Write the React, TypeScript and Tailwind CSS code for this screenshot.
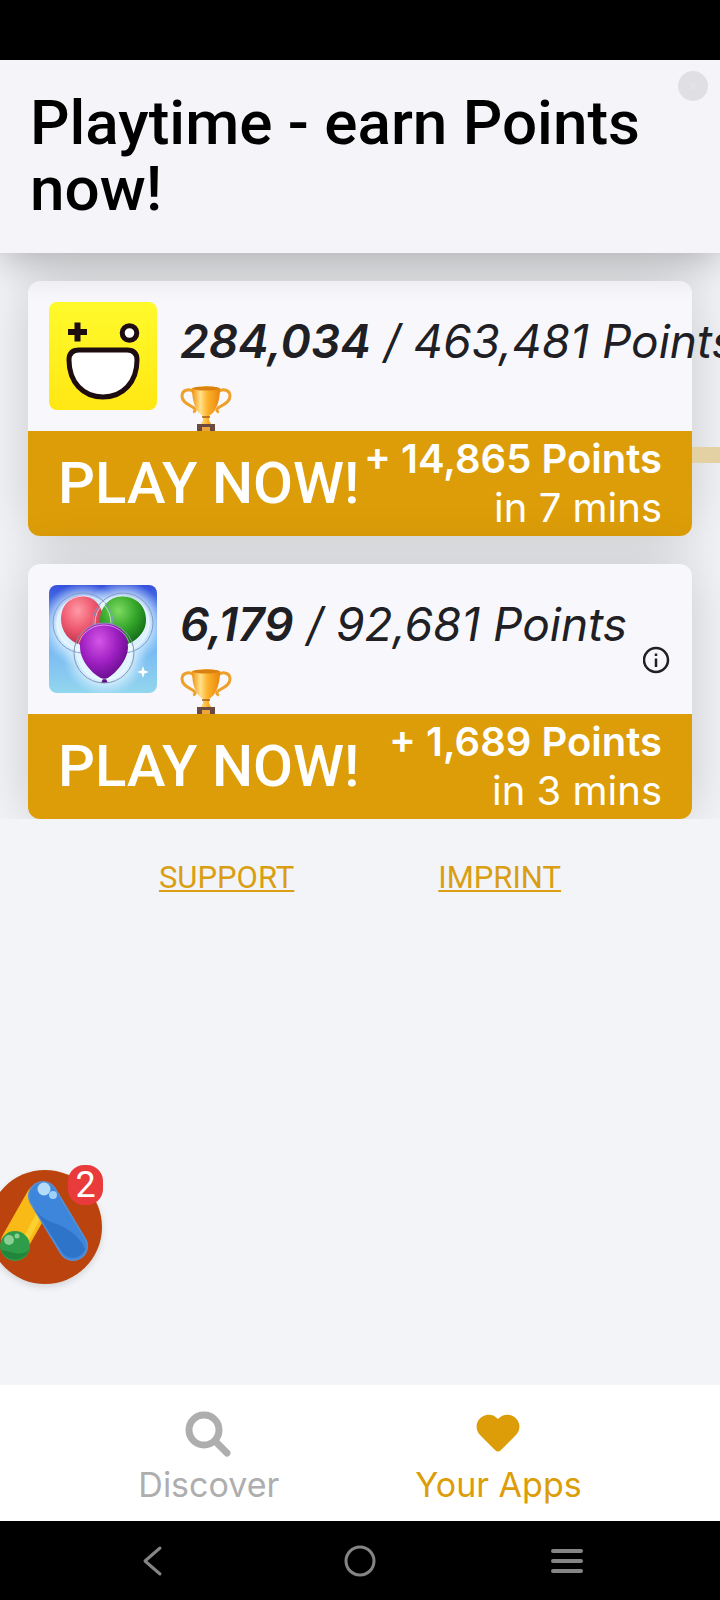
import type { ReactNode } from 'react';

type Offer = {
  id: number;
  icon: ReactNode;
  earned: string;
  total: string;
  reward: string;
  time: string;
  info: boolean;
};

const SmileIcon = () => (
  <svg viewBox="0 0 108 108" className="w-full h-full" aria-hidden="true">
    <defs>
      <linearGradient id="smileBg" x1="0" y1="0" x2="0" y2="1">
        <stop offset="0" stopColor="#fffa2c" />
        <stop offset="1" stopColor="#ffe713" />
      </linearGradient>
    </defs>
    <rect width="108" height="108" fill="url(#smileBg)" />
    <path d="M19 30h19M28.500 20.500v19" stroke="#1d0d10" strokeWidth="6" />
    <circle cx="80.500" cy="31" r="7.300" fill="#fff" stroke="#1d0d10" strokeWidth="5" />
    <path
      d="M30 48H78Q88 48 88 58C88 80 74 95 54 95S20 80 20 58Q20 48 30 48Z"
      fill="#fff"
      stroke="#1d0d10"
      strokeWidth="5"
    />
  </svg>
);

const BalloonIcon = () => (
  <svg viewBox="0 0 108 108" className="w-full h-full" aria-hidden="true">
    <defs>
      <linearGradient id="sky" x1="0" y1="0" x2="0" y2="1">
        <stop offset="0" stopColor="#3650dc" />
        <stop offset=".45" stopColor="#6fb0f4" />
        <stop offset="1" stopColor="#93d6ee" />
      </linearGradient>
      <radialGradient id="glow">
        <stop offset=".6" stopColor="#e6f6ff" stopOpacity=".95" />
        <stop offset="1" stopColor="#bfe4ff" stopOpacity="0" />
      </radialGradient>
      <radialGradient id="pink" cx=".4" cy=".3" r=".75">
        <stop offset="0" stopColor="#ff9aa5" />
        <stop offset=".5" stopColor="#ef5a70" />
        <stop offset="1" stopColor="#b82c48" />
      </radialGradient>
      <radialGradient id="green" cx=".4" cy=".3" r=".75">
        <stop offset="0" stopColor="#7fdb62" />
        <stop offset=".5" stopColor="#36a82c" />
        <stop offset="1" stopColor="#0f6614" />
      </radialGradient>
      <radialGradient id="purple" cx=".4" cy=".3" r=".75">
        <stop offset="0" stopColor="#d455e6" />
        <stop offset=".5" stopColor="#9d1fc0" />
        <stop offset="1" stopColor="#55087c" />
      </radialGradient>
    </defs>
    <rect width="108" height="108" fill="url(#sky)" />
    <circle cx="34" cy="40" r="42" fill="url(#glow)" />
    <circle cx="74" cy="38" r="42" fill="url(#glow)" />
    <circle cx="56" cy="70" r="42" fill="url(#glow)" />
    <path d="M32 11C45 11 54 21 54 34S40 57 32 60C20 57 12 46 12 34S20 11 32 11Z" fill="url(#pink)" />
    <path d="M74 11C88 11 97 22 97 35S86 57 76 60C62 57 51 47 51 35S60 11 74 11Z" fill="url(#green)" />
    <circle cx="34" cy="38" r="30" fill="none" stroke="#7f9cc8" />
    <circle cx="35" cy="38" r="27" fill="none" stroke="#fff" strokeOpacity=".6" />
    <circle cx="74" cy="38" r="30" fill="none" stroke="#7f9cc8" />
    <circle cx="73" cy="38" r="27" fill="none" stroke="#fff" strokeOpacity=".6" />
    <path d="M55 38C70 38 79 48 79 62S65 90 57 94L59 98H52L54 94C44 90 31 76 31 62S41 38 55 38Z" fill="url(#purple)" />
    <circle cx="55" cy="68" r="30" fill="none" stroke="#8794b8" />
    <circle cx="55" cy="67" r="27" fill="none" stroke="#fff" strokeOpacity=".5" />
    <path d="M94 81l1.500 4.500L100 87l-4.500 1.500L94 93l-1.500-4.500L88 87l4.500-1.500Z" fill="#fff" />
  </svg>
);

const Trophy = () => (
  <svg viewBox="0 0 52 52" className="w-[52px] h-[52px]" role="img" aria-label="Trophy">
    <defs>
      <linearGradient id="cup" x1="0" x2="1">
        <stop offset="0" stopColor="#f0920f" />
        <stop offset=".3" stopColor="#ffe08a" />
        <stop offset=".55" stopColor="#fdb32b" />
        <stop offset="1" stopColor="#e8860c" />
      </linearGradient>
    </defs>
    <path
      d="M14 7C9 3 2 5 2 11C2 17 8 19 14 23Q17 26 13 27M38 7C43 3 50 5 50 11C50 17 44 19 38 23Q35 26 39 27"
      fill="none"
      stroke="#eda02a"
      strokeWidth="3"
    />
    <path d="M12 3Q26 -1 40 3C40 17 36 27 29 31V35Q30 38 33 41H19Q22 38 23 35V31C16 27 12 17 12 3Z" fill="url(#cup)" />
    <ellipse cx="26" cy="3.500" rx="13" ry="2" fill="#d98212" />
    <path d="M22 32H30" stroke="#a85e10" strokeWidth="1.500" />
    <path d="M17 39H35V52H17Z" fill="#6b4a42" />
    <path d="M22 42H30V49H22Z" fill="#eca53b" />
  </svg>
);

const AdsBubble = () => (
  <svg viewBox="0 0 116 116" className="w-full h-full drop-shadow-md" aria-hidden="true">
    <circle cx="58" cy="58" r="57" fill="#bb430d" />
    <path d="M28 73L53 29" stroke="#f9b916" strokeWidth="28" strokeLinecap="round" />
    <path d="M32 83L53 44" stroke="#fbd02f" strokeWidth="6" />
    <path d="M56 27L86 77" stroke="#5a8fd0" strokeWidth="30" strokeLinecap="round" />
    <path d="M56 27L86 77" stroke="#3d86dc" strokeWidth="27" strokeLinecap="round" />
    <path d="M46 38Q54 50 67 54Q90 62 98 80A13 13 0 0 1 75 83Z" fill="#2e74c9" />
    <circle cx="28" cy="77" r="15" fill="#2f9c49" />
    <path d="M14 81A15 15 0 0 0 42 81Q36 86 28 84T14 81Z" fill="#21863b" />
    <circle cx="22" cy="71" r="5" fill="#8bcf93" />
    <circle cx="30" cy="67" r="2.500" fill="#8bcf93" />
    <circle cx="57" cy="20" r="6.500" fill="#b4dcf9" />
    <circle cx="66" cy="26" r="4" fill="#a0d0f8" />
  </svg>
);

const offers: Offer[] = [
  {
    id: 1,
    icon: <SmileIcon />,
    earned: '284,034',
    total: '463,481 Points',
    reward: '+ 14,865 Points',
    time: 'in 7 mins',
    info: false,
  },
  {
    id: 2,
    icon: <BalloonIcon />,
    earned: '6,179',
    total: '92,681 Points',
    reward: '+ 1,689 Points',
    time: 'in 3 mins',
    info: true,
  },
];

const OfferCard = ({ offer }: { offer: Offer }) => (
  <article className="relative rounded-xl bg-[#f8f8fc] shadow-[0_0_56px_rgba(0,0,0,0.18)]">
    {/* Progress track of the neighbouring slide */}
    {!offer.info && <div className="absolute left-full top-[166px] w-10 h-4 bg-[#e3d1a3]"></div>}

    <div className="flex h-[150px] px-[21px] pt-[21px]">
      <div className="w-[108px] h-[108px] shrink-0 rounded-lg overflow-hidden">{offer.icon}</div>
      <div className="ml-[23px] pt-[7px] flex-1 min-w-0 whitespace-nowrap font-['Inter',sans-serif] text-[46px] leading-[64px] italic font-normal text-[#202024]">
        <p>
          <strong className="font-semibold">{offer.earned}</strong> / {offer.total}
        </p>
        <div className="pt-3">
          <Trophy />
        </div>
      </div>
      {offer.info && (
        <button type="button" aria-label="Offer details" className="shrink-0 self-start mt-[61px] w-7 h-7">
          <svg viewBox="0 0 28 28" fill="none" stroke="#202024" strokeWidth="2.500">
            <circle cx="13" cy="14" r="12" />
            <path d="M13 12.500V21M13 7.500V10" />
          </svg>
        </button>
      )}
    </div>

    <button
      type="button"
      className="relative flex w-full h-[105px] items-center justify-between rounded-b-xl bg-[#dc9d08] px-[30px] pb-[2px] text-white whitespace-nowrap"
    >
      <span className="text-[58px] leading-[64px] font-medium">PLAY NOW!</span>
      <span className="flex flex-col text-right font-['Inter',sans-serif] text-[40px] leading-[49px]">
        <span className="font-semibold">{offer.reward}</span>
        <span>{offer.time}</span>
      </span>
    </button>
  </article>
);

const App = () => {
  return (
    <div className="min-h-screen flex flex-col overflow-hidden bg-[#f3f4f7] font-['Roboto',sans-serif]">
      <div className="h-[60px] bg-black"></div>

      <header className="relative z-10 bg-[#f4f4f9] px-[30px] pt-[30px] pb-[31px] shadow-[0_4px_40px_rgba(0,0,0,0.32)]">
        <h1 className="text-[62px] leading-[66px] font-medium text-black">Playtime - earn Points now!</h1>
        <button
          type="button"
          aria-label="Close"
          className="absolute right-3 top-[11px] w-[30px] h-[30px] rounded-full bg-[#dfdfe4] flex items-center justify-center"
        >
          <svg viewBox="0 0 10 10" className="w-2 h-2" stroke="#e5e5e9" strokeWidth="2">
            <path d="M1 1l8 8M9 1l-8 8" />
          </svg>
        </button>
      </header>

      <main className="relative flex-1">
        <section className="flex flex-col gap-7 overflow-hidden px-7 pt-7">
          {offers.map((offer) => (
            <OfferCard key={offer.id} offer={offer} />
          ))}
        </section>

        <div className="flex justify-center gap-36 pt-[41px] text-[31px] leading-[36px] text-[#d99e14]">
          <a href="#support" className="underline decoration-2 underline-offset-2">SUPPORT</a>
          <a href="#imprint" className="underline decoration-2 underline-offset-2">IMPRINT</a>
        </div>

        {/* Floating bubble */}
        <button type="button" aria-label="Ads, 2 notifications" className="absolute -left-[13px] bottom-[100px] w-[116px] h-[116px]">
          <AdsBubble />
          <span className="absolute right-0 -top-1 w-[35px] h-10 rounded-2xl bg-[#e93b3b] text-white text-[36px] leading-[40px]">
            2
          </span>
        </button>
      </main>

      <nav className="flex justify-center gap-[136px] bg-white pt-6 pb-[14px] font-['Inter',sans-serif] text-[34px] leading-[44px]">
        <a href="#discover" className="flex flex-col items-center text-[#aeaeae]">
          <svg viewBox="0 0 48 48" className="w-12 h-12 mb-1.5" fill="none" stroke="currentColor">
            <circle cx="19" cy="21" r="15" strokeWidth="7" />
            <path d="M31 33L42 44" strokeWidth="7" strokeLinecap="round" />
          </svg>
          Discover
        </a>
        <a href="#apps" className="flex flex-col items-center text-[#dc9d08]">
          <svg viewBox="0 0 48 48" className="w-12 h-12 mb-1.5" fill="currentColor">
            <path d="M24 10C18 3 8 5 4 12C1 18 3 23 7 27L21 41Q24 44 27 41L41 27C45 23 47 18 44 12C40 5 30 3 24 10Z" />
          </svg>
          Your Apps
        </a>
      </nav>

      <div className="flex h-[79px] items-center justify-between bg-black px-[137px]">
        <button type="button" aria-label="Back">
          <svg viewBox="0 0 32 32" className="w-8 h-8" fill="none" stroke="#858585" strokeWidth="3" strokeLinecap="round" strokeLinejoin="round">
            <path d="M23 3L8 16L23 29" />
          </svg>
        </button>
        <button type="button" aria-label="Home">
          <svg viewBox="0 0 32 32" className="w-8 h-8" fill="none" stroke="#858585" strokeWidth="3">
            <circle cx="16" cy="16" r="14" />
          </svg>
        </button>
        <button type="button" aria-label="Recent apps">
          <svg viewBox="0 0 32 32" className="w-8 h-8" stroke="#858585" strokeWidth="4" strokeLinecap="round">
            <path d="M2 6H30M2 16H30M2 26H30" />
          </svg>
        </button>
      </div>
    </div>
  );
};

export default App;
